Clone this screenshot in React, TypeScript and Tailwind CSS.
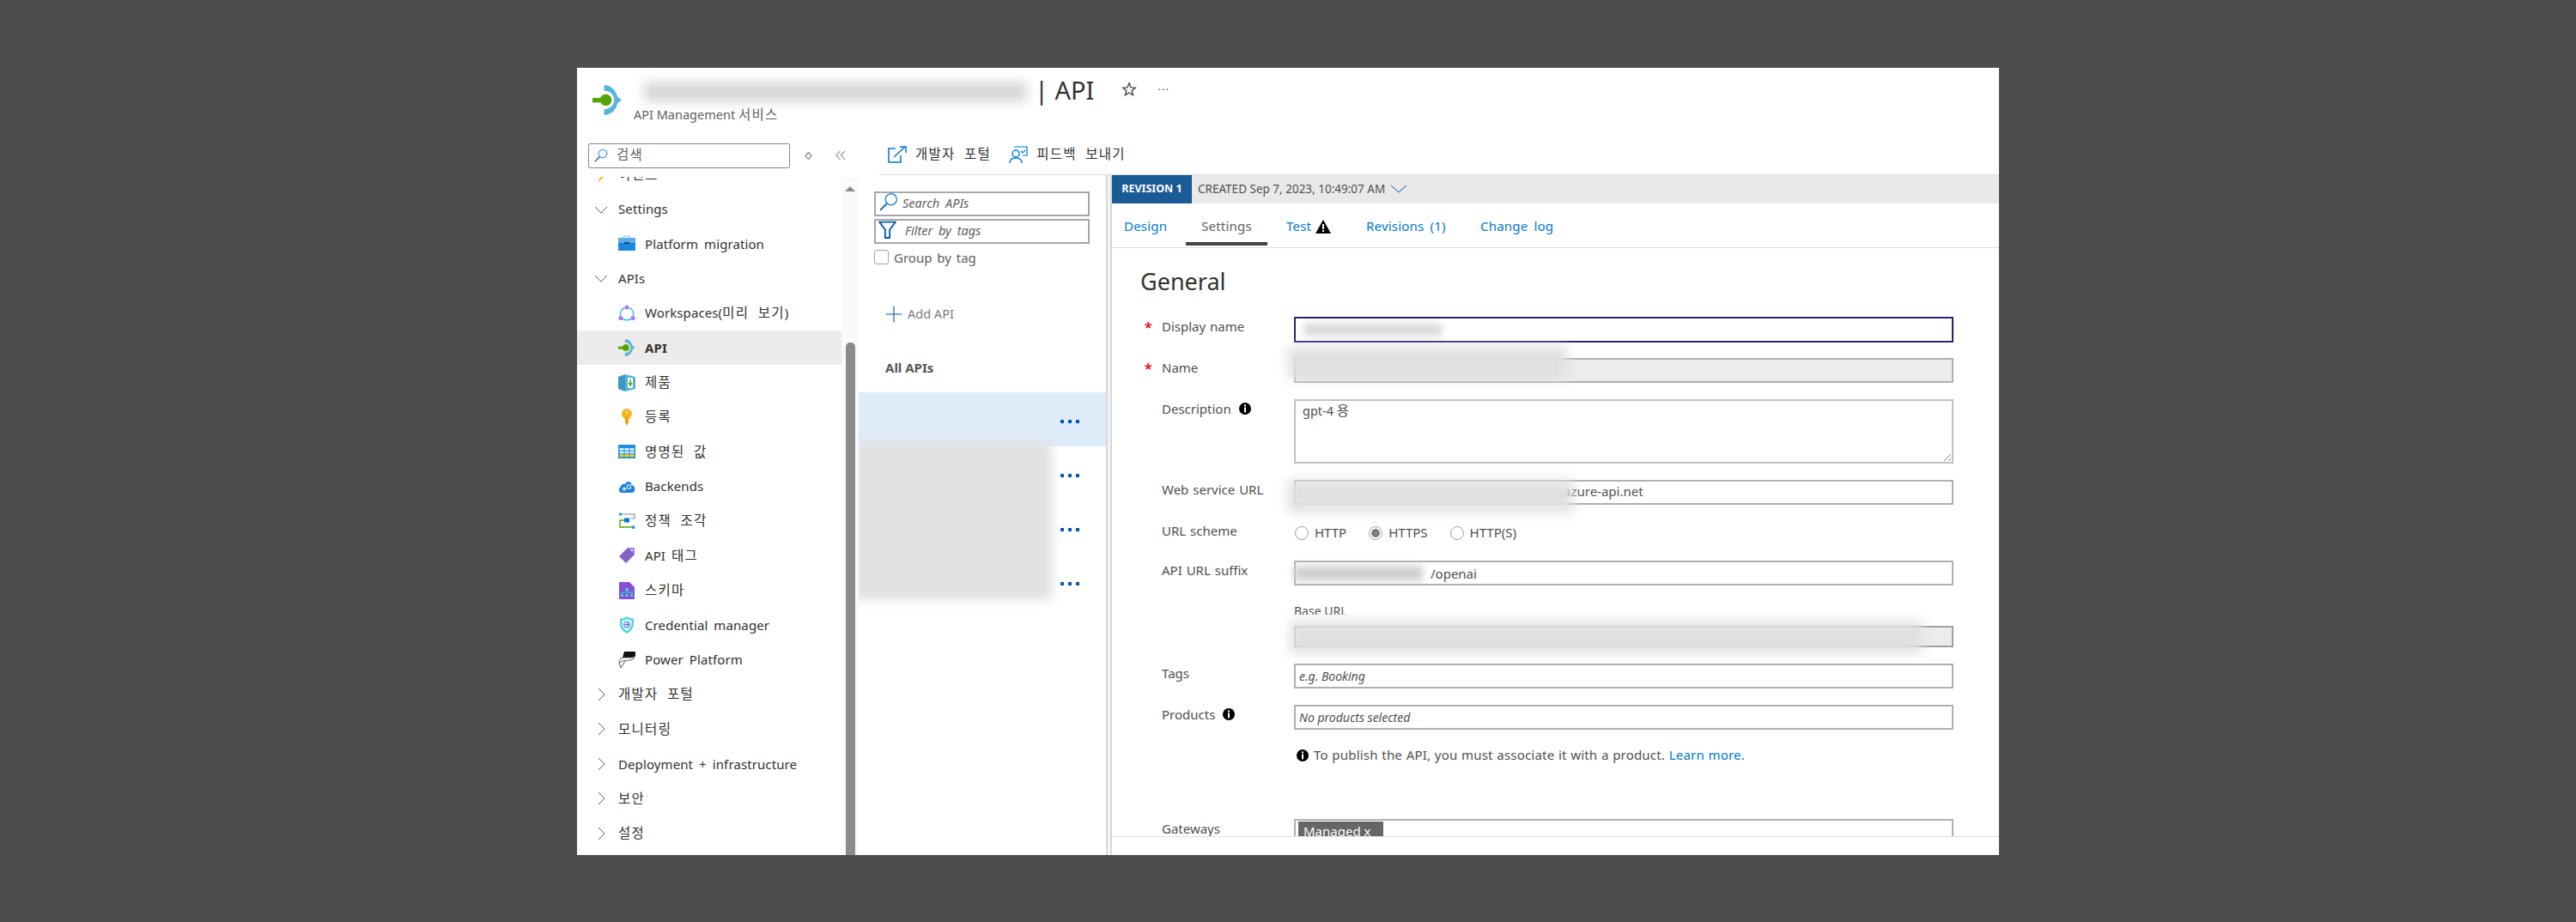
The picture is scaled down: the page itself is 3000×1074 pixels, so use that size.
import type { ReactNode } from 'react';

const font = { fontFamily: '"Noto Sans", "Noto Sans CJK KR", sans-serif' };

// hangul runs sit wider and larger than the latin text around them
function Ko({ text }: { text: string }) {
  const parts = text.split(/([가-힣]+(?: [가-힣]+)*)/);
  return (
    <span>
      {parts.map((part, i) =>
        i % 2 === 1 ? (
          <span key={i} className="text-[15.5px] tracking-[1.3px] [word-spacing:5px]">{part}</span>
        ) : (
          <span key={i}>{part}</span>
        ),
      )}
    </span>
  );
}

function ApiLogo({ className }: { className: string }) {
  return (
    <svg viewBox="0 0 36 36" className={className}>
      <path d="M14 0 C22 0 28 6 30 14 L35 18 L30 22 C28 30 22 36 14 36 V29 C21 29 26 24 26 18 C26 12 21 7 14 7 Z" fill="#59b4d9" />
      <rect x="0" y="15.5" width="12" height="5.5" fill="#57a300" />
      <circle cx="16" cy="18" r="7" fill="#57a300" />
    </svg>
  );
}

function Chevron({ open }: { open: boolean }) {
  return (
    <svg viewBox="0 0 16 16" className="w-4 h-4 shrink-0">
      <path d={open ? 'M1 5 L8 12 L15 5' : 'M5 1 L12 8 L5 15'} fill="none" stroke="#605e5c" strokeWidth="1" />
    </svg>
  );
}

function SearchIcon({ className }: { className: string }) {
  return (
    <svg viewBox="0 0 20 20" className={className}>
      <circle cx="12.5" cy="7.5" r="6" fill="none" stroke="#3a8fd6" strokeWidth="1.4" />
      <path d="M8.2 11.8 L1 19" stroke="#0a5aa8" strokeWidth="1.6" />
    </svg>
  );
}

function InfoIcon({ className }: { className?: string }) {
  return (
    <svg viewBox="0 0 14 14" className={className ?? 'w-[14px] h-[14px]'}>
      <circle cx="7" cy="7" r="7" fill="#000" />
      <rect x="6" y="2.4" width="2" height="2" fill="#fff" />
      <rect x="6" y="5.4" width="2" height="6" fill="#fff" />
    </svg>
  );
}

const icons: Record<string, ReactNode> = {
  case: (
    <>
      <rect x="6.5" y="1" width="7" height="3" fill="none" stroke="#9cc8ec" strokeWidth="1.2" />
      <rect x="0" y="3" width="20" height="6" fill="#5ea9e6" />
      <rect x="0" y="9" width="20" height="9" fill="#1a86dc" />
      <rect x="7" y="8" width="6" height="2" fill="#11508f" />
    </>
  ),
  work: (
    <>
      <path d="M7 3.8 C3.5 5.2 1.8 9 2.6 13 M13 3.8 C16.5 5.2 18.2 9 17.4 13 M5.5 16.5 C8 18 12 18 14.5 16.5" fill="none" stroke="#32bedd" strokeWidth="1.5" />
      <circle cx="10" cy="3" r="2.6" fill="#a67af4" />
      <circle cx="3" cy="15.5" r="2.6" fill="#a67af4" />
      <circle cx="17" cy="15.5" r="2.6" fill="#a67af4" />
    </>
  ),
  product: (
    <>
      <path d="M0 3 L8 0 V20 L0 17 Z" fill="#3999c6" />
      <path d="M8 0 L20 3 V17 L8 20 Z" fill="#59b4d9" />
      <rect x="11" y="4" width="6" height="12" fill="#fff" />
      <path d="M14 6 V11 M12 10 L14 13 L16 10" stroke="#57a300" strokeWidth="1.4" fill="none" />
    </>
  ),
  key: (
    <>
      <circle cx="10" cy="6" r="6" fill="#fcb426" />
      <path d="M8 10 H12 V16 L10 20 L8 16 Z" fill="#f0a000" />
      <circle cx="10" cy="4" r="1.2" fill="#fff2c4" />
    </>
  ),
  table: (
    <>
      <rect x="0" y="2" width="20" height="16" fill="#1f8fe0" />
      <rect x="1.5" y="6" width="5" height="2.6" fill="#dff0fb" />
      <rect x="7.5" y="6" width="5" height="2.6" fill="#dff0fb" />
      <rect x="13.5" y="6" width="5" height="2.6" fill="#dff0fb" />
      <rect x="1.5" y="9.6" width="5" height="2.6" fill="#dff0fb" />
      <rect x="7.5" y="9.6" width="5" height="2.6" fill="#dff0fb" />
      <rect x="13.5" y="9.6" width="5" height="2.6" fill="#dff0fb" />
      <rect x="1.5" y="13.2" width="5" height="3" fill="#fcd116" />
      <rect x="7.5" y="13.2" width="5" height="3" fill="#fcd116" />
      <rect x="13.5" y="13.2" width="5" height="3" fill="#fcd116" />
    </>
  ),
  cloud: (
    <>
      <path d="M4 17 C0 17 0 11 3 10 C3 7 6 6 8 7 C10 2 16 4 15.5 8 C20 8 21 17 16 17 Z" fill="#1f84d8" />
      <rect x="10.5" y="8" width="4" height="4" fill="none" stroke="#d6ebfa" strokeWidth="1.2" />
      <circle cx="7" cy="12.5" r="2" fill="#d6ebfa" />
    </>
  ),
  flow: (
    <>
      <path d="M4 2 H19 V7 H14" fill="none" stroke="#8a8a8a" strokeWidth="1.2" />
      <path d="M7 9 H2 V17 H16" fill="none" stroke="#57a300" strokeWidth="1.4" />
      <rect x="1" y="0.5" width="3" height="3" fill="#1aa0e0" />
      <rect x="7" y="6.5" width="6" height="5" fill="#0078d4" />
      <rect x="16" y="15.5" width="3.4" height="3.4" fill="#1aa0e0" />
    </>
  ),
  tag: (
    <>
      <path d="M11 1 H19 V9 L9 19 L1 11 Z" fill="#8661c5" />
      <path d="M11 1 H19 V9 L15 5 Z" fill="#a67af4" />
      <circle cx="16" cy="4" r="1" fill="#fff" />
    </>
  ),
  schema: (
    <>
      <path d="M1 0 H13 L19 6 V20 H1 Z" fill="#8a4fd7" />
      <path d="M4 15 V12 H16 V15 M10 9 V12" fill="none" stroke="#32d4c8" strokeWidth="1.2" />
      <rect x="8" y="7" width="4" height="3" fill="#32d4c8" />
      <rect x="3" y="14" width="3" height="3" fill="#32d4c8" />
      <rect x="8.5" y="14" width="3" height="3" fill="#32d4c8" />
      <rect x="14" y="14" width="3" height="3" fill="#32d4c8" />
    </>
  ),
  shield: (
    <>
      <path d="M10 0 C13 2 15 2.5 18 2.5 V9 C18 14 14 17.5 10 20 C6 17.5 2 14 2 9 V2.5 C5 2.5 7 2 10 0 Z" fill="#50d0ef" />
      <path d="M10 3 C12 4 14 4.5 15.5 4.5 V9 C15.5 12.5 13 15 10 17 C7 15 4.5 12.5 4.5 9 V4.5 C6 4.5 8 4 10 3 Z" fill="#fff" />
      <circle cx="10" cy="9.5" r="3.4" fill="none" stroke="#1aa0e0" strokeWidth="1.2" />
      <path d="M7 9.5 H11 M10 8 L12 9.5 L10 11" fill="none" stroke="#b146c2" strokeWidth="1.2" />
    </>
  ),
  power: (
    <>
      <path d="M7 0 H20 V5 C19 7 15 7 9 7 H5 Z" fill="#111" />
      <path d="M5 7 H19 C17 11 10 10 5 11 L1 13 C1 10 2 8 5 7 Z" fill="#fff" stroke="#555" strokeWidth="0.9" />
      <path d="M1 13 L3 19 L8 11" fill="none" stroke="#555" strokeWidth="1" />
    </>
  ),
};

function NavIcon({ name }: { name: string }) {
  return (
    <svg viewBox="0 0 20 20" className="w-5 h-5 shrink-0">
      {icons[name]}
    </svg>
  );
}

const rowText = 'text-[15px] tracking-[0.1px] [word-spacing:3px] text-[#323130]';

function GroupRow({ label, open, lead }: { label: string; open?: boolean; lead?: ReactNode }) {
  return (
    <div className={`h-[40.4px] flex items-center ${rowText}`}>
      <div className="w-[48px] pl-[20px]">{lead ?? <Chevron open={!!open} />}</div>
      <Ko text={label} />
    </div>
  );
}

function ChildRow({ label, icon, active }: { label: string; icon: ReactNode; active?: boolean }) {
  return (
    <div className={`h-[40.4px] flex items-center pl-[48px] gap-[11px] ${rowText} ${active ? 'bg-[#edebe9] font-bold' : ''}`}>
      {icon}
      <Ko text={label} />
    </div>
  );
}

function Sidebar() {
  return (
    <div className="w-[328px] shrink-0 flex flex-col min-h-0">
      <div className="h-[45px] shrink-0 pt-[6px] pl-[13px] flex items-start">
        <div className="w-[235px] h-[29px] rounded-[2px] border border-[#8a8886] flex items-center pl-[6px] gap-[10px] text-[15px] text-[#605e5c]">
          <SearchIcon className="w-[16px] h-[16px]" />
          <Ko text="검색" />
        </div>
        <svg viewBox="0 0 10 10" className="w-[9px] h-[9px] ml-[17px] mt-[10px]">
          <path d="M5 0.5 L9 5 L5 9.5 L1 5 Z" fill="none" stroke="#8a8886" strokeWidth="1.4" />
        </svg>
        <svg viewBox="0 0 12 12" className="w-[12px] h-[12px] ml-[27px] mt-[8px]">
          <path d="M5.5 1 L1 6 L5.5 11 M11 1 L6.5 6 L11 11" fill="none" stroke="#8a8886" strokeWidth="1.1" />
        </svg>
      </div>
      <div className="flex flex-1 min-h-0">
        <div className="w-[308px] overflow-hidden">
          <div className="-mt-[22.5px]">
            <GroupRow
              label="이벤트"
              lead={
                <svg viewBox="0 0 16 20" className="w-4 h-5">
                  <path d="M2 9 H15 L4 20 L7 13 Z" fill="#fcb426" />
                </svg>
              }
            />
            <GroupRow label="Settings" open />
            <ChildRow label="Platform migration" icon={<NavIcon name="case" />} />
            <GroupRow label="APIs" open />
            <ChildRow label="Workspaces(미리 보기)" icon={<NavIcon name="work" />} />
            <ChildRow label="API" active icon={<ApiLogo className="w-5 h-5 shrink-0" />} />
            <ChildRow label="제품" icon={<NavIcon name="product" />} />
            <ChildRow label="등록" icon={<NavIcon name="key" />} />
            <ChildRow label="명명된 값" icon={<NavIcon name="table" />} />
            <ChildRow label="Backends" icon={<NavIcon name="cloud" />} />
            <ChildRow label="정책 조각" icon={<NavIcon name="flow" />} />
            <ChildRow label="API 태그" icon={<NavIcon name="tag" />} />
            <ChildRow label="스키마" icon={<NavIcon name="schema" />} />
            <ChildRow label="Credential manager" icon={<NavIcon name="shield" />} />
            <ChildRow label="Power Platform" icon={<NavIcon name="power" />} />
            <GroupRow label="개발자 포털" open={false} />
            <GroupRow label="모니터링" open={false} />
            <GroupRow label="Deployment + infrastructure" open={false} />
            <GroupRow label="보안" open={false} />
            <GroupRow label="설정" open={false} />
          </div>
        </div>
        <div className="w-[20px] bg-[#fafafa] flex flex-col items-center">
          <div className="h-[193px] pt-[11px]">
            <div className="w-0 h-0 border-x-[6px] border-x-transparent border-b-[6px] border-b-[#8a8a8a]" />
          </div>
          <div className="w-[11px] flex-1 rounded-t-[5px] bg-[#8c8c8c]" />
        </div>
      </div>
    </div>
  );
}

function ApiList() {
  return (
    <div className="w-[288px] shrink-0 relative overflow-hidden text-[#605e5c]">
      <div className="pt-[19px] pl-[18px] pr-[19px]">
        <div className="h-[29px] border-2 border-[#a6a6a6] flex items-center pl-[4px] gap-[5px] text-[14.5px] [word-spacing:3px] italic">
          <SearchIcon className="w-[22px] h-[22px] -mt-[4px]" />
          <span>Search APIs</span>
        </div>
        <div className="h-[29px] mt-[3px] border-2 border-[#a6a6a6] flex items-center pl-[3px] gap-[10px] text-[14.5px] [word-spacing:3px] italic">
          <svg viewBox="0 0 20 20" className="w-[21px] h-[21px] -mt-[4px]">
            <path d="M1 1.5 H19 L12.5 10 V19 H7.5 V10 Z" fill="none" stroke="#0a5aa8" strokeWidth="1.8" />
          </svg>
          <span>Filter by tags</span>
        </div>
        <div className="flex items-center mt-[5px] gap-[6px] text-[15px] [word-spacing:2px]">
          <div className="w-[17px] h-[17px] rounded-[3px] border border-[#a6a6a6]" />
          <span>Group by tag</span>
        </div>
      </div>
      <div className="flex items-center gap-[6px] mt-[44px] pl-[31px] text-[14.5px] text-[#7a7a7a]">
        <svg viewBox="0 0 20 20" className="w-[20px] h-[20px]">
          <path d="M10 0.5 V19.5 M0.5 10 H19.5" stroke="#0a5aa8" strokeWidth="1.1" />
        </svg>
        <span>Add API</span>
      </div>
      <div className="mt-[40px] pl-[31px] text-[15px] font-bold text-[#555]">All APIs</div>
      <div className="mt-[18px]">
        {[true, false, false, false].map((selected, i) => (
          <div key={i} className={`h-[63px] flex items-center justify-end pr-[31px] pt-[4px] gap-[5px] ${selected ? 'bg-[#deecf9]' : ''}`}>
            <span className="w-1 h-1 bg-[#0a5aa8]" />
            <span className="w-1 h-1 bg-[#0a5aa8]" />
            <span className="w-1 h-1 bg-[#0a5aa8]" />
          </div>
        ))}
      </div>
      {/* redacted names */}
      <div className="absolute -left-[5px] top-[310px] w-[230px] h-[185px] bg-[#e1e1e1] blur-[6px]" />
    </div>
  );
}

function FormRow({ label, required, info, top, children }: { label: string; required?: boolean; info?: boolean; top: string; children: ReactNode }) {
  return (
    <div className={`flex relative ${top}`}>
      <div className="w-[212px] shrink-0 pl-[58px] flex items-start text-[15px] [word-spacing:1px] text-[#505050] gap-[9px]">
        <span>{label}</span>
        {info && <InfoIcon className="w-[14px] h-[14px] mt-[4px]" />}
      </div>
      {required && <span className="absolute left-[38px] top-[0px] text-[16px] font-bold text-[#e81123]">*</span>}
      {children}
    </div>
  );
}

function Radio({ label, checked }: { label: string; checked?: boolean }) {
  return (
    <div className="flex items-center gap-[7px]">
      <div className="w-[16px] h-[16px] rounded-full border border-[#a0a0a0] flex items-center justify-center">
        {checked && <div className="w-[10px] h-[10px] rounded-full bg-[#7d7d7d]" />}
      </div>
      <span>{label}</span>
    </div>
  );
}

const input = 'w-[768px] h-[29px] border-2 border-[#b0b0b0] flex items-center text-[#505050]';

function Detail() {
  return (
    <div className="flex-1 min-w-0 flex flex-col text-[#505050]">
      <div className="h-[33px] shrink-0 bg-[#e9e9e9] flex items-center text-[13.5px] text-[#505050]">
        <div className="w-[93px] h-full bg-[#1a5a96] text-white font-bold flex items-center justify-center text-[12.5px]">REVISION 1</div>
        <span className="ml-[7px]">CREATED Sep 7, 2023, 10:49:07 AM</span>
        <svg viewBox="0 0 20 10" className="w-[20px] h-[10px] ml-[6px]">
          <path d="M1 1 L10 9 L19 1" fill="none" stroke="#0a5aa8" strokeWidth="1" />
        </svg>
      </div>
      <div className="h-[52px] shrink-0 border-b border-[#e0e0e0] flex text-[15px] tracking-[0.2px] [word-spacing:3px] text-[#0078d4]">
        <div className="w-[86px] pl-[14px] pt-[15px]">Design</div>
        <div className="w-[95px] h-[49px] border-b-4 border-[#444] text-center pt-[15px] text-[#605e5c]">Settings</div>
        <div className="w-[115px] pl-[22px] pt-[15px] flex items-start gap-[5px]">
          <span>Test</span>
          <svg viewBox="0 0 18 16" className="w-[18px] h-[16px] mt-[4px]">
            <path d="M9 0 L18 16 H0 Z" fill="#000" />
            <rect x="8" y="5" width="2" height="6" fill="#fff" />
            <rect x="8" y="12" width="2" height="2" fill="#fff" />
          </svg>
        </div>
        <div className="w-[133px] pt-[15px]">Revisions (1)</div>
        <div className="pt-[15px]">Change log</div>
      </div>
      <div className="flex-1 min-h-0 overflow-hidden relative">
        <div className="pl-[33px] pt-[20px] text-[27px] leading-[38px] text-[#323130]">General</div>

        <FormRow label="Display name" required top="mt-[22px]">
          <div className="w-[768px] h-[30px] border-2 border-[#24246e] relative overflow-hidden">
            <div className="absolute left-[10px] top-[6px] w-[160px] h-[14px] bg-[#d8d8d8] blur-[4px]" />
          </div>
        </FormRow>

        <FormRow label="Name" required top="mt-[18px]">
          <div className={`${input} bg-[#ececec]`} />
        </FormRow>

        <FormRow label="Description" info top="mt-[19px]">
          <div className="w-[768px] h-[75px] border-2 border-[#c0c0c0] px-[8px] text-[14.5px] relative">
            <Ko text="gpt-4 용" />
            <svg viewBox="0 0 12 12" className="absolute right-0 bottom-0 w-3 h-3">
              <path d="M11 3 L3 11 M11 8 L8 11" stroke="#777" strokeWidth="1" />
            </svg>
          </div>
        </FormRow>

        <FormRow label="Web service URL" top="mt-[19px]">
          <div className={`${input} pl-[312px] pb-[2px] text-[15px]`}>azure-api.net</div>
        </FormRow>

        <FormRow label="URL scheme" top="mt-[19px]">
          <div className="flex items-center gap-[26px] text-[15px] h-[28px] pl-[1px]">
            <Radio label="HTTP" />
            <Radio label="HTTPS" checked />
            <Radio label="HTTP(S)" />
          </div>
        </FormRow>

        <FormRow label="API URL suffix" top="mt-[18px]">
          <div className={`${input} pl-[157px] pt-[2px] text-[15px]`}>/openai</div>
          <div className="absolute left-[212px] top-[6px] w-[150px] h-[18px] bg-[#d0d0d0] blur-[4px]" />
        </FormRow>

        <div className="ml-[212px] mt-[20px] h-[14px] overflow-hidden text-[14px] leading-[20px] text-[#505050]">Base URL</div>
        <div className="ml-[212px] mt-[13px] w-[768px] h-[25px] border-2 border-[#a0a0a0] bg-[#ececec]" />

        <FormRow label="Tags" top="mt-[19px]">
          <div className={`${input} pl-[4px] text-[14px] italic`}>e.g. Booking</div>
        </FormRow>

        <FormRow label="Products" info top="mt-[19px]">
          <div className={`${input} pl-[4px] text-[14px] italic`}>No products selected</div>
        </FormRow>

        <div className="ml-[215px] mt-[20px] flex items-center gap-[6px] text-[15px] tracking-[0.2px] [word-spacing:0.5px] text-[#505050] h-[20px]">
          <InfoIcon />
          <span>
            To publish the API, you must associate it with a product. <span className="text-[#0078d4]">Learn more.</span>
          </span>
        </div>

        <FormRow label="Gateways" top="mt-[64px]">
          <div className="w-[768px] h-[40px] border-2 border-[#b0b0b0] pl-[3px] pt-[1px]">
            <div className="w-[99px] h-[30px] bg-[#666] text-white text-[15px] pl-[6px]">Managed x</div>
          </div>
        </FormRow>

        {/* redacted values */}
        <div className="absolute left-[205px] top-[115px] w-[325px] h-[38px] bg-[#e0e0e0] blur-[7px]" />
        <div className="absolute left-[205px] top-[270px] w-[332px] h-[38px] bg-[#e0e0e0] blur-[7px]" />
        <div className="absolute left-[208px] top-[434px] w-[735px] h-[38px] bg-[#e0e0e0] blur-[7px]" />
      </div>
      <div className="h-[22px] shrink-0 border-t border-[#e0e0e0]" />
    </div>
  );
}

export default function App() {
  return (
    <div className="min-h-screen bg-[#4d4d4d] flex items-center justify-center" style={font}>
      <div className="w-[1656px] h-[917px] bg-white flex flex-col overflow-hidden">
        {/* Header */}
        <div className="h-[82px] shrink-0 relative flex items-start pl-[18px] pt-[20px]">
          <ApiLogo className="w-[35px] h-[35px] shrink-0" />
          <div className="ml-[13px] mt-[23px] text-[14.5px] text-[#605e5c]">
            <Ko text="API Management 서비스" />
          </div>
          <div className="absolute left-[78px] top-[17px] w-[445px] h-[22px] bg-[#d4d4d4] blur-[7px]" />
          <div className="absolute left-[533px] top-[4px] flex items-center text-[29px] text-[#323130]">
            <span>| API</span>
            <svg viewBox="0 0 20 20" className="w-[18px] h-[18px] ml-[32px]">
              <path d="M10 2 L12.2 7.6 L18 8 L13.5 11.8 L15 17.6 L10 14.4 L5 17.6 L6.5 11.8 L2 8 L7.8 7.6 Z" fill="none" stroke="#444" strokeWidth="1.5" />
            </svg>
            <span className="ml-[24px] text-[13px] tracking-[1px] text-[#605e5c]">···</span>
          </div>
        </div>
        <div className="flex flex-1 min-h-0">
          <Sidebar />
          <div className="flex-1 min-w-0 flex flex-col">
            {/* Command bar */}
            <div className="h-[43px] shrink-0 ml-[24px] border-b border-[#dcdcdc] flex items-center pb-[4px] text-[15px] text-[#323130]">
              <svg viewBox="0 0 22 20" className="w-[22px] h-[20px] ml-[10px]">
                <path d="M9 3 H1 V19 H15 V11" fill="none" stroke="#0078d4" strokeWidth="1.5" />
                <path d="M7 13 L20 1 M14 1 H21 V8" fill="none" stroke="#0078d4" strokeWidth="1.5" />
              </svg>
              <span className="ml-[10px]">
                <Ko text="개발자 포털" />
              </span>
              <svg viewBox="0 0 22 20" className="w-[22px] h-[20px] ml-[21px]">
                <circle cx="8" cy="9" r="4" fill="none" stroke="#0078d4" strokeWidth="1.4" />
                <path d="M1 20 C1 15 4 14 8 14 C12 14 15 15 15 20" fill="none" stroke="#0078d4" strokeWidth="1.4" />
                <path d="M6 1 H21 V11 H16" fill="none" stroke="#0078d4" strokeWidth="1.2" />
                <path d="M14 6 L16 8 L19 5" fill="none" stroke="#0078d4" strokeWidth="1.2" />
              </svg>
              <span className="ml-[10px]">
                <Ko text="피드백 보내기" />
              </span>
            </div>
            <div className="flex flex-1 min-h-0">
              <ApiList />
              <div className="w-[7px] shrink-0 border-x-2 border-x-[#d8d8d8] bg-[#f4f4f4]" />
              <Detail />
            </div>
          </div>
        </div>
      </div>
    </div>
  );
}
